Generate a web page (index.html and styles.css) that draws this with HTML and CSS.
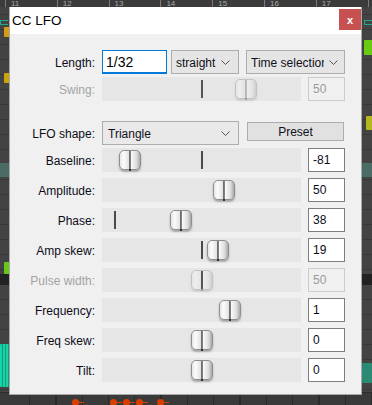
FILE: index.html
```html
<!DOCTYPE html>
<html lang="en">
<head>
  <meta charset="UTF-8" />
  <title>CC LFO</title>
  <link rel="stylesheet" href="styles.css">
</head>
<body>

  <!-- MIDI editor behind the dialog -->
  <div class="ruler">
    <span>11</span><span>12</span><span>13</span><span>14</span><span>15</span><span>16</span><span>17</span><span></span>
  </div>
  <div class="band band-teal"></div>
  <div class="band band-dark"></div>
  <div class="marker marker-left"></div>
  <div class="marker marker-right"></div>
  <div class="note note-orange"></div>
  <div class="note note-yellow"></div>
  <div class="note note-green-left"></div>
  <div class="note note-green-right"></div>
  <div class="note note-olive"></div>
  <div class="note note-teal-left"></div>
  <div class="note note-teal-right"></div>
  <div class="cc-lane">
    <i class="cc-dot" style="left:72px"></i>
    <i class="cc-dot" style="left:110px"></i>
    <i class="cc-dot" style="left:123px"></i>
    <i class="cc-dot" style="left:136px"></i>
    <i class="cc-dot" style="left:157px"></i>
  </div>

  <div class="dialog">
    <div class="titlebar">
      <span class="title">CC LFO</span>
      <button class="close">x</button>
    </div>

    <div class="content">
      <div class="row row-first">
        <label class="row-label">Length:</label>
        <div class="length-controls">
          <input type="text" class="text-input" value="1/32" />
          <div class="combo combo-sync">straight
            <svg width="9" height="5" viewBox="0 0 9 5"><polyline points="0.5,0.5 4.5,4.5 8.5,0.5" /></svg>
          </div>
          <div class="combo combo-range"><span class="combo-text">Time selection</span>
            <svg width="9" height="5" viewBox="0 0 9 5"><polyline points="0.5,0.5 4.5,4.5 8.5,0.5" /></svg>
          </div>
        </div>
      </div>

      <div class="row row-tight disabled">
        <label class="row-label">Swing:</label>
        <div class="track">
          <span class="tick" style="left:99px"></span>
          <span class="thumb" style="left:133px"></span>
        </div>
        <div class="value">50</div>
      </div>

      <div class="row row-shape">
        <label class="row-label">LFO shape:</label>
        <div class="shape-controls">
          <div class="combo combo-shape">Triangle
            <svg width="9" height="5" viewBox="0 0 9 5"><polyline points="0.5,0.5 4.5,4.5 8.5,0.5" /></svg>
          </div>
          <button class="preset">Preset</button>
        </div>
      </div>

      <div class="row row-tight">
        <label class="row-label">Baseline:</label>
        <div class="track">
          <span class="tick" style="left:99px"></span>
          <span class="thumb" style="left:17px"></span>
        </div>
        <div class="value">-81</div>
      </div>

      <div class="row">
        <label class="row-label">Amplitude:</label>
        <div class="track">
          <span class="thumb" style="left:111px"></span>
        </div>
        <div class="value">50</div>
      </div>

      <div class="row">
        <label class="row-label">Phase:</label>
        <div class="track">
          <span class="tick" style="left:12px"></span>
          <span class="thumb" style="left:68px"></span>
        </div>
        <div class="value">38</div>
      </div>

      <div class="row">
        <label class="row-label">Amp skew:</label>
        <div class="track">
          <span class="tick" style="left:99px"></span>
          <span class="thumb" style="left:105px"></span>
        </div>
        <div class="value">19</div>
      </div>

      <div class="row disabled">
        <label class="row-label">Pulse width:</label>
        <div class="track">
          <span class="thumb" style="left:89px"></span>
          <span class="tick" style="left:99px"></span>
        </div>
        <div class="value">50</div>
      </div>

      <div class="row">
        <label class="row-label">Frequency:</label>
        <div class="track">
          <span class="thumb" style="left:117px"></span>
        </div>
        <div class="value">1</div>
      </div>

      <div class="row">
        <label class="row-label">Freq skew:</label>
        <div class="track">
          <span class="thumb" style="left:89px"></span>
        </div>
        <div class="value">0</div>
      </div>

      <div class="row">
        <label class="row-label">Tilt:</label>
        <div class="track">
          <span class="thumb" style="left:89px"></span>
        </div>
        <div class="value">0</div>
      </div>
    </div>
  </div>

</body>
</html>
```

FILE: styles.css
```css
* {
  box-sizing: border-box;
}

body {
  margin: 0;
  width: 372px;
  height: 405px;
  overflow: hidden;
  position: relative;
  font-family: "Liberation Sans", Arial, sans-serif;
  font-size: 12px;
  color: #000;
  background-color: #3f3f3f;
  background-image: repeating-linear-gradient(to bottom, #434343 0, #434343 14px, #383838 14px, #383838 15px);
}

/* ---------- editor background ---------- */

.ruler {
  position: absolute;
  top: 0;
  left: 0;
  right: 0;
  height: 7px;
  overflow: hidden;
  display: flex;
  padding-left: 5px;
  background: #3b3b3b;
}

.ruler span {
  flex: 0 0 51.8px;
  border-left: 1px solid #7c7c7c;
  padding-left: 5px;
  color: #a8a8a8;
  font-size: 8px;
  line-height: 7px;
}

.band {
  position: absolute;
  left: 0;
  right: 0;
}

.band-teal {
  top: 163px;
  height: 14px;
  background: #4c6b65;
}

.band-dark {
  top: 274px;
  height: 11px;
  background: #222;
}

.marker {
  position: absolute;
  top: 20px;
  height: 5px;
  border: 1px solid #1fa88a;
  border-right: 0;
}

.marker-left {
  left: 0;
  width: 8px;
}

.marker-right {
  left: 364px;
  width: 8px;
}

.note {
  position: absolute;
  border-radius: 1px;
}

.note-orange {
  left: 4px;
  top: 27px;
  width: 8px;
  height: 10px;
  background: #d49b14;
}

.note-yellow {
  left: 4px;
  top: 73px;
  width: 8px;
  height: 10px;
  background: #c9a50a;
}

.note-green-left {
  left: 4px;
  top: 262px;
  width: 8px;
  height: 12px;
  background: #67c816;
}

.note-green-right {
  left: 364px;
  top: 40px;
  width: 10px;
  height: 15px;
  background: #6acc12;
}

.note-olive {
  left: 366px;
  top: 116px;
  width: 8px;
  height: 14px;
  background: #b5b71e;
}

.note-teal-left {
  left: 0;
  top: 344px;
  width: 12px;
  height: 43px;
  background: repeating-linear-gradient(to right, #17d3a6 0, #17d3a6 2px, #0f9c7c 2px, #0f9c7c 3px);
}

.note-teal-right {
  left: 362px;
  top: 363px;
  width: 10px;
  height: 20px;
  background: #2b8a73;
}

.cc-lane {
  position: absolute;
  left: 0;
  right: 0;
  top: 392px;
  height: 13px;
  background-color: #3a3a3a;
  background-image: repeating-linear-gradient(to right, transparent 0, transparent 25px, #2a2a2a 25px, #2a2a2a 26.3px);
  background-position: 4px 0;
  border-top: 1px solid #2c2c2c;
}

.cc-dot {
  position: absolute;
  top: 6px;
  width: 7px;
  height: 7px;
  border-radius: 50%;
  background: #d93d00;
}

.cc-dot::after {
  content: "";
  position: absolute;
  left: 6px;
  top: 3px;
  width: 6px;
  height: 1px;
  background: #d93d00;
}

/* ---------- dialog ---------- */

.dialog {
  position: absolute;
  left: 9px;
  top: 7px;
  width: 353px;
  height: 388px;
  background: #f0f0f0;
  border: 1px solid #a8a8a8;
  border-top: 0;
}

.titlebar {
  height: 27px;
  background: #fff;
  display: flex;
  justify-content: space-between;
  align-items: center;
  padding-left: 2px;
}

.title {
  font-size: 13.5px;
  color: #000;
}

.close {
  align-self: flex-start;
  margin-top: 2px;
  width: 22px;
  height: 21px;
  border: none;
  padding: 0;
  background: #c75050;
  color: #fff;
  font-family: "Liberation Sans", Arial, sans-serif;
  font-size: 11px;
  font-weight: bold;
}

.content {
  padding-top: 16px;
}

.row {
  display: grid;
  grid-template-columns: 85px 199px 37px;
  column-gap: 7px;
  height: 24px;
  align-items: center;
  margin-top: 6px;
}

.row-first {
  margin-top: 0;
}

.row-tight {
  margin-top: 3px;
}

.row-shape {
  margin-top: 20px;
}

.row-label {
  text-align: right;
  padding-top: 2px;
  color: #0c0c18;
}

.row.disabled .row-label {
  color: #a3a3a3;
}

/* length row */

.length-controls {
  grid-column: 2 / 4;
  display: flex;
  height: 24px;
}

.text-input {
  width: 65px;
  height: 24px;
  margin: 0 4px 0 0;
  padding: 0 0 0 3px;
  border: 1px solid #0078d7;
  border-bottom-width: 2px;
  background: #fff;
  font-family: "Liberation Sans", Arial, sans-serif;
  font-size: 14px;
  color: #000;
  outline: none;
}

.combo {
  display: flex;
  align-items: center;
  justify-content: space-between;
  height: 24px;
  padding: 1px 8px 0 4px;
  border: 1px solid #adadad;
  background: #e5e5e5;
  color: #101020;
  white-space: nowrap;
  overflow: hidden;
}

.combo svg {
  flex: none;
  fill: none;
  stroke: #555;
  stroke-width: 1;
}

.combo-sync {
  width: 68px;
  margin-right: 7px;
}

.combo-range {
  width: 99px;
  padding-right: 6px;
}

.combo-text {
  width: 73px;
  overflow: hidden;
}

/* lfo shape row */

.shape-controls {
  grid-column: 2 / 4;
  display: flex;
  align-items: flex-start;
  height: 24px;
}

.combo-shape {
  width: 137px;
  margin-right: 8px;
  padding-left: 5px;
  background: #e9e9e9;
}

.preset {
  width: 97px;
  height: 19px;
  margin-top: 1px;
  padding: 0;
  border: 1px solid #adadad;
  background: #e1e1e1;
  font-family: "Liberation Sans", Arial, sans-serif;
  font-size: 12px;
  color: #101020;
}

/* sliders */

.track {
  position: relative;
  height: 24px;
  background: #e6e6e6;
}

.tick {
  position: absolute;
  top: 3px;
  width: 2px;
  height: 18px;
  background: #4a4a4a;
}

.thumb {
  position: absolute;
  top: 2px;
  width: 22px;
  height: 20px;
  border: 1px solid #8e8e8e;
  border-radius: 5px;
  background: linear-gradient(to right, #e6e6e6 0%, #fbfbfb 18%, #e2e2e2 44%, #6f6f6f 47%, #6f6f6f 52%, #fafafa 56%, #dedede 82%, #a9a9a9 100%);
  box-shadow: 0 2px 2px rgba(0, 0, 0, 0.28);
}

.thumb::after {
  content: "";
  position: absolute;
  left: 9px;
  bottom: -2px;
  width: 2px;
  height: 2px;
  background: #333;
}

.row.disabled .thumb {
  opacity: 0.4;
}

.row.disabled .tick {
  background: #555;
}

.value {
  height: 24px;
  padding: 4px 0 0 4px;
  border: 1px solid #7d7d7d;
  background: #fff;
  color: #0c0c18;
  font-size: 12px;
}

.row.disabled .value {
  background: #f0f0f0;
  border-color: #cccccc;
  color: #9a9a9a;
}
```
